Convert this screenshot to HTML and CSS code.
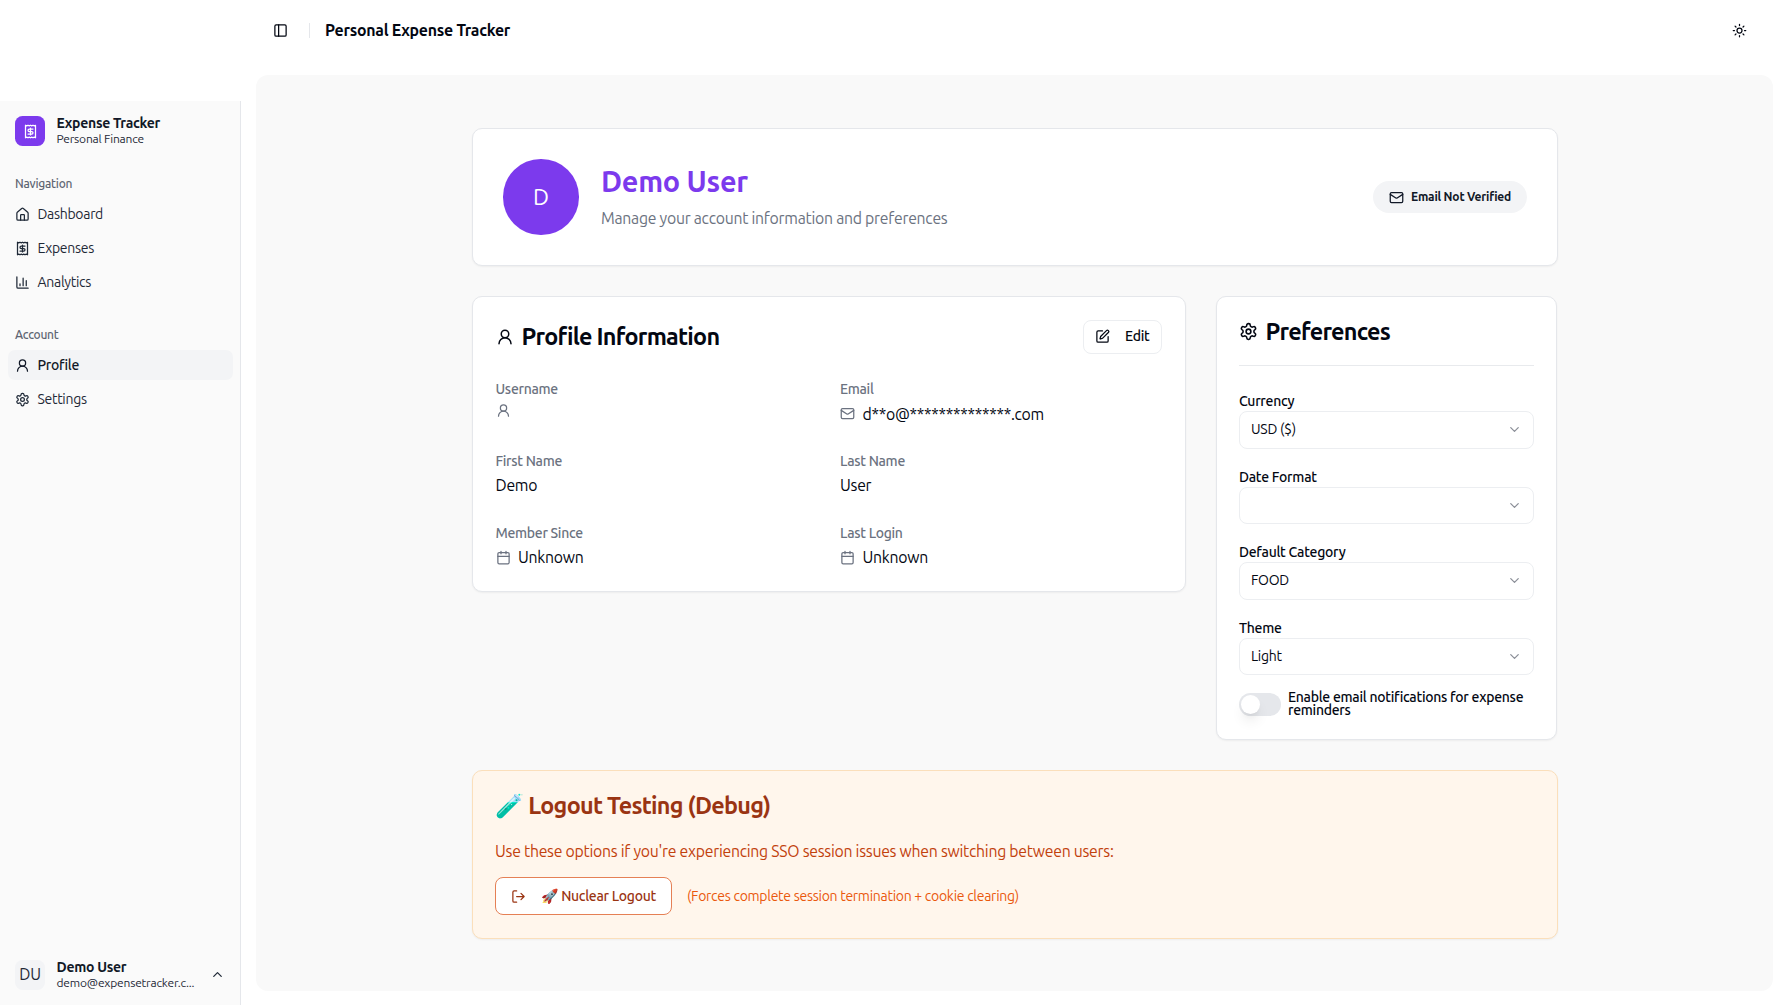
FILE: index.html
```html
<!DOCTYPE html>
<html lang="en">
<head>
<meta charset="utf-8">
<title>Personal Expense Tracker</title>
<link rel="stylesheet" href="styles.css">
</head>
<body>
<svg class="sprite" width="0" height="0" aria-hidden="true">
  <symbol id="i-panel" viewBox="0 0 24 24"><rect width="18" height="18" x="3" y="3" rx="2"/><path d="M9 3v18"/></symbol>
  <symbol id="i-sun" viewBox="0 0 24 24"><circle cx="12" cy="12" r="4"/><path d="M12 2v2M12 20v2M4.93 4.93l1.41 1.41M17.66 17.66l1.41 1.41M2 12h2M20 12h2M6.34 17.66l-1.41 1.41M19.07 4.93l-1.41 1.41"/></symbol>
  <symbol id="i-receipt" viewBox="0 0 24 24"><path d="M4 2v20l2-1 2 1 2-1 2 1 2-1 2 1 2-1 2 1V2l-2 1-2-1-2 1-2-1-2 1-2-1-2 1Z"/><path d="M16 8h-6a2 2 0 1 0 0 4h4a2 2 0 1 1 0 4H8M12 17.5v-11"/></symbol>
  <symbol id="i-home" viewBox="0 0 24 24"><path d="M15 21v-8a1 1 0 0 0-1-1h-4a1 1 0 0 0-1 1v8"/><path d="M3 10a2 2 0 0 1 .709-1.528l7-5.999a2 2 0 0 1 2.582 0l7 5.999A2 2 0 0 1 21 10v9a2 2 0 0 1-2 2H5a2 2 0 0 1-2-2z"/></symbol>
  <symbol id="i-chart" viewBox="0 0 24 24"><path d="M3 3v16a2 2 0 0 0 2 2h16M18 17V9M13 17V5M8 17v-3"/></symbol>
  <symbol id="i-user" viewBox="0 0 24 24"><circle cx="12" cy="8" r="5"/><path d="M20 21a8 8 0 0 0-16 0"/></symbol>
  <symbol id="i-gear" viewBox="0 0 24 24"><path d="M12.22 2h-.44a2 2 0 0 0-2 2v.18a2 2 0 0 1-1 1.73l-.43.25a2 2 0 0 1-2 0l-.15-.08a2 2 0 0 0-2.73.73l-.22.38a2 2 0 0 0 .73 2.73l.15.1a2 2 0 0 1 1 1.72v.51a2 2 0 0 1-1 1.74l-.15.09a2 2 0 0 0-.73 2.73l.22.38a2 2 0 0 0 2.73.73l.15-.08a2 2 0 0 1 2 0l.43.25a2 2 0 0 1 1 1.73V20a2 2 0 0 0 2 2h.44a2 2 0 0 0 2-2v-.18a2 2 0 0 1 1-1.73l.43-.25a2 2 0 0 1 2 0l.15.08a2 2 0 0 0 2.73-.73l.22-.39a2 2 0 0 0-.73-2.73l-.15-.08a2 2 0 0 1-1-1.74v-.5a2 2 0 0 1 1-1.74l.15-.09a2 2 0 0 0 .73-2.73l-.22-.38a2 2 0 0 0-2.73-.73l-.15.08a2 2 0 0 1-2 0l-.43-.25a2 2 0 0 1-1-1.73V4a2 2 0 0 0-2-2z"/><circle cx="12" cy="12" r="3"/></symbol>
  <symbol id="i-up" viewBox="0 0 24 24"><path d="m18 15-6-6-6 6"/></symbol>
  <symbol id="i-down" viewBox="0 0 24 24"><path d="m6 9 6 6 6-6"/></symbol>
  <symbol id="i-mail" viewBox="0 0 24 24"><rect width="20" height="16" x="2" y="4" rx="2"/><path d="m22 7-8.97 5.7a1.94 1.94 0 0 1-2.06 0L2 7"/></symbol>
  <symbol id="i-edit" viewBox="0 0 24 24"><path d="M12 3H5a2 2 0 0 0-2 2v14a2 2 0 0 0 2 2h14a2 2 0 0 0 2-2v-7"/><path d="M18.375 2.625a1 1 0 0 1 3 3l-9.013 9.014a2 2 0 0 1-.853.505l-2.873.84a.5.5 0 0 1-.62-.62l.84-2.873a2 2 0 0 1 .506-.852z"/></symbol>
  <symbol id="i-calendar" viewBox="0 0 24 24"><path d="M8 2v4M16 2v4M3 10h18"/><rect width="18" height="18" x="3" y="4" rx="2"/></symbol>
  <symbol id="i-logout" viewBox="0 0 24 24"><path d="M9 21H5a2 2 0 0 1-2-2V5a2 2 0 0 1 2-2h4M16 17l5-5-5-5M21 12H9"/></symbol>
</svg>
<div class="app">
  <aside class="sidebar">
    <div class="brand">
      <span class="brand-logo"><svg class="icon"><use href="#i-receipt"/></svg></span>
      <div class="two-line"><b>Expense Tracker</b><span>Personal Finance</span></div>
    </div>
    <nav class="group">
      <h2>Navigation</h2>
      <a><svg class="icon"><use href="#i-home"/></svg>Dashboard</a>
      <a><svg class="icon"><use href="#i-receipt"/></svg>Expenses</a>
      <a><svg class="icon"><use href="#i-chart"/></svg>Analytics</a>
    </nav>
    <nav class="group">
      <h2>Account</h2>
      <a class="active"><svg class="icon"><use href="#i-user"/></svg>Profile</a>
      <a><svg class="icon"><use href="#i-gear"/></svg>Settings</a>
    </nav>
    <div class="account">
      <span class="initials">DU</span>
      <div class="two-line"><b>Demo User</b><span>demo@expensetracker.c...</span></div>
      <svg class="icon"><use href="#i-up"/></svg>
    </div>
  </aside>
  <div class="main">
    <header class="topbar">
      <svg class="icon"><use href="#i-panel"/></svg>
      <span class="separator"></span>
      <h1>Personal Expense Tracker</h1>
      <svg class="icon theme"><use href="#i-sun"/></svg>
    </header>
    <main class="inset">
      <section class="card hero">
        <span class="avatar">D</span>
        <div class="hero-text"><h2>Demo User</h2><p>Manage your account information and preferences</p></div>
        <span class="badge"><svg class="icon"><use href="#i-mail"/></svg>Email Not Verified</span>
      </section>
      <div class="columns">
        <section class="card profile">
          <div class="card-head">
            <h3><svg class="icon"><use href="#i-user"/></svg>Profile Information</h3>
            <button class="edit"><svg class="icon"><use href="#i-edit"/></svg>Edit</button>
          </div>
          <dl class="fields">
            <div><dt>Username</dt><dd class="blank"><svg class="icon"><use href="#i-user"/></svg></dd></div>
            <div><dt>Email</dt><dd><svg class="icon"><use href="#i-mail"/></svg>d**o@**************.com</dd></div>
            <div><dt>First Name</dt><dd>Demo</dd></div>
            <div><dt>Last Name</dt><dd>User</dd></div>
            <div><dt>Member Since</dt><dd><svg class="icon"><use href="#i-calendar"/></svg>Unknown</dd></div>
            <div><dt>Last Login</dt><dd><svg class="icon"><use href="#i-calendar"/></svg>Unknown</dd></div>
          </dl>
        </section>
        <section class="card preferences">
          <h3><svg class="icon"><use href="#i-gear"/></svg>Preferences</h3>
          <div class="pref"><label>Currency</label><div class="select">USD ($)<svg class="icon"><use href="#i-down"/></svg></div></div>
          <div class="pref"><label>Date Format</label><div class="select"><svg class="icon"><use href="#i-down"/></svg></div></div>
          <div class="pref"><label>Default Category</label><div class="select">FOOD<svg class="icon"><use href="#i-down"/></svg></div></div>
          <div class="pref"><label>Theme</label><div class="select">Light<svg class="icon"><use href="#i-down"/></svg></div></div>
          <div class="notify"><span class="toggle"><i></i></span><label>Enable email notifications for expense reminders</label></div>
        </section>
      </div>
      <section class="card debug">
        <h3>🧪 Logout Testing (Debug)</h3>
        <p>Use these options if you're experiencing SSO session issues when switching between users:</p>
        <div class="debug-row">
          <button class="nuclear"><svg class="icon"><use href="#i-logout"/></svg><span>🚀 Nuclear Logout</span></button>
          <span>(Forces complete session termination + cookie clearing)</span>
        </div>
      </section>
    </main>
  </div>
</div>
</body>
</html>
```
FILE: styles.css
```css
* { box-sizing: border-box; margin: 0; padding: 0; }
body {
  font-family: Ubuntu, "Noto Sans", "Noto Color Emoji", sans-serif;
  font-size: 15.8px;
  letter-spacing: -.26px;
  line-height: 22.6px;
  color: #030712;
  background: #fff;
  overflow: hidden;
}
button { font: inherit; letter-spacing: inherit; }
.sprite { position: absolute; }
.icon {
  width: 15px; height: 15px; flex: none;
  fill: none; stroke: currentColor; stroke-width: 2;
  stroke-linecap: round; stroke-linejoin: round;
}
.app { display: flex; height: 1005px; }

.sidebar {
  width: 241px; flex: none; margin-top: 101px;
  display: flex; flex-direction: column;
  background: #fafafa; border-right: 1px solid #e5e7eb; color: #1f2937;
}
.brand { display: flex; align-items: center; gap: 11.5px; padding: 15px 15px 14.5px; height: 59.5px; }
.brand-logo {
  width: 30px; height: 30px; border-radius: 7.5px;
  display: grid; place-items: center; background: #7c3aed; color: #fff;
}
.two-line { display: flex; flex-direction: column; font-size: 12px; letter-spacing: -.19px; line-height: 15px; padding-bottom: 1px; color: #1f2937; }
.two-line b { font-size: 14px; font-weight: 700; letter-spacing: -.28px; line-height: 16px; color: #111827; }
.group { display: flex; flex-direction: column; gap: 4px; padding: 7.5px; }
.group h2 {
  height: 30px; padding-left: 7.5px; margin-bottom: -3px;
  font-size: 12px; letter-spacing: -.23px; font-weight: 500; line-height: 31px; color: #5f6673;
}
.group a {
  display: flex; align-items: center; gap: 7.5px; height: 30px; padding: 0 7.5px;
  border-radius: 7px; font-size: 14px; letter-spacing: -.3px;
}
.group .active { background: #f3f4f6; font-weight: 500; color: #111827; }
.group + .group { padding-top: 14.5px; }
.account { margin-top: auto; display: flex; align-items: center; gap: 11.5px; padding: 0 15px 14.5px; }
.account .icon { margin-left: auto; }
.initials {
  width: 30px; height: 30px; border-radius: 7.5px; background: #f3f4f6;
  display: grid; place-items: center;
}

.main { flex: 1; display: flex; flex-direction: column; padding: 0 15px 14px; }
.topbar { display: flex; align-items: center; height: 75px; padding: 0 26.5px 14.5px 17px; }
.separator { width: 1px; height: 15px; margin: 0 15px 0 21px; background: #e5e7eb; }
.topbar h1 { font-size: 15.9px; font-weight: 600; }
.theme { margin-left: auto; }
.inset { flex: 1; border-radius: 12px; background: #f9f9f9; padding: 53px 0 0 216px; }

.card {
  width: 1086px; border: 1px solid #e5e7eb; border-radius: 10px; background: #fff;
  box-shadow: 0 1px 2px rgba(0, 0, 0, .05);
}
.hero { display: flex; align-items: center; height: 138px; padding: 0 30px; }
.avatar {
  width: 75.5px; height: 75.5px; border-radius: 50%; margin-right: 22.5px;
  display: grid; place-items: center; background: #7c3aed; color: #fff; font-size: 22.6px;
}
.hero h2 { font-size: 28.9px; font-weight: 700; line-height: 34px; color: #7c3aed; }
.hero p { margin-top: 8.5px; color: #6b7280; }
.badge {
  display: flex; align-items: center; gap: 7.5px; height: 32px; padding: 0 16px; margin-left: auto;
  border-radius: 16px; background: #f3f4f6; color: #111827; font-size: 12px; letter-spacing: -.2px; font-weight: 600;
}
.columns { display: grid; grid-template-columns: 714px 341px; gap: 30px; align-items: start; margin: 30px 0; }
.columns .card { width: auto; }
.card h3 { display: flex; align-items: center; font-size: 23.4px; font-weight: 700; letter-spacing: -.75px; white-space: pre; }
.card h3 .icon { width: 19px; height: 19px; margin-right: 7.5px; }

.profile { height: 296px; padding: 22.5px; }
.card-head { display: flex; justify-content: space-between; align-items: center; height: 34px; }
.card-head h3 .icon { width: 18px; height: 18px; margin-left: .5px; }
.edit {
  display: flex; align-items: center; gap: 15px; height: 34px; padding: 0 11px; margin-right: 1px;
  border: 1px solid #eceef1; border-radius: 8px; background: #fff; color: #030712;
  font-size: 14px; line-height: 23px; font-weight: 500;
}
.fields { display: grid; grid-template-columns: 344.5px 1fr; grid-auto-rows: 71.8px; margin-top: 25.5px; }
dt { height: 19px; font-size: 14px; letter-spacing: -.3px; font-weight: 500; line-height: 20px; color: #6b7280; }
dd { display: flex; align-items: center; gap: 7.5px; height: 22.6px; margin-top: 4.5px; }
dd.blank { height: 15px; }
dd .icon { color: #6b7280; }

.preferences { height: 444px; padding: 0 22px; }
.preferences h3 { height: 69px; border-bottom: 1px solid #e8eaed; margin-bottom: 28px; }
.pref { height: 75.5px; }
label { display: block; font-size: 14px; letter-spacing: -.27px; font-weight: 500; line-height: 13.2px; }
.pref label { height: 17px; line-height: 14px; }
.select {
  display: flex; align-items: center; height: 37.5px; padding: 0 11px;
  border: 1px solid #eceef1; border-radius: 8px; font-size: 14px;
}
.select .icon { margin-left: auto; color: #8b8f98; }
.notify { display: flex; align-items: center; gap: 7.5px; margin-top: -5px; }
.toggle { flex: none; width: 41.5px; height: 23px; padding: 2px; border-radius: 12px; background: #e5e7eb; }
.toggle i {
  display: block; width: 19px; height: 19px; border-radius: 50%; background: #fff;
  box-shadow: 0 9px 14px -3px rgba(0, 0, 0, .12), 0 4px 6px -4px rgba(0, 0, 0, .1);
}

.debug { height: 168.5px; padding: 22px; border-color: #fbdfbb; background: #fff6ec; }
.debug h3 { line-height: 24px; color: #9a3412; }
.debug p { margin: 22.5px 0 15px; color: #c2410c; }
.debug-row { display: flex; align-items: center; gap: 15px; font-size: 14px; letter-spacing: -.28px; color: #ea580c; }
.nuclear {
  display: flex; align-items: center; gap: 15px; height: 38px; padding: 0 15px;
  border: 1px solid #e58055; border-radius: 8px; background: #fff; color: #9a3412; font-weight: 500;
}
```
